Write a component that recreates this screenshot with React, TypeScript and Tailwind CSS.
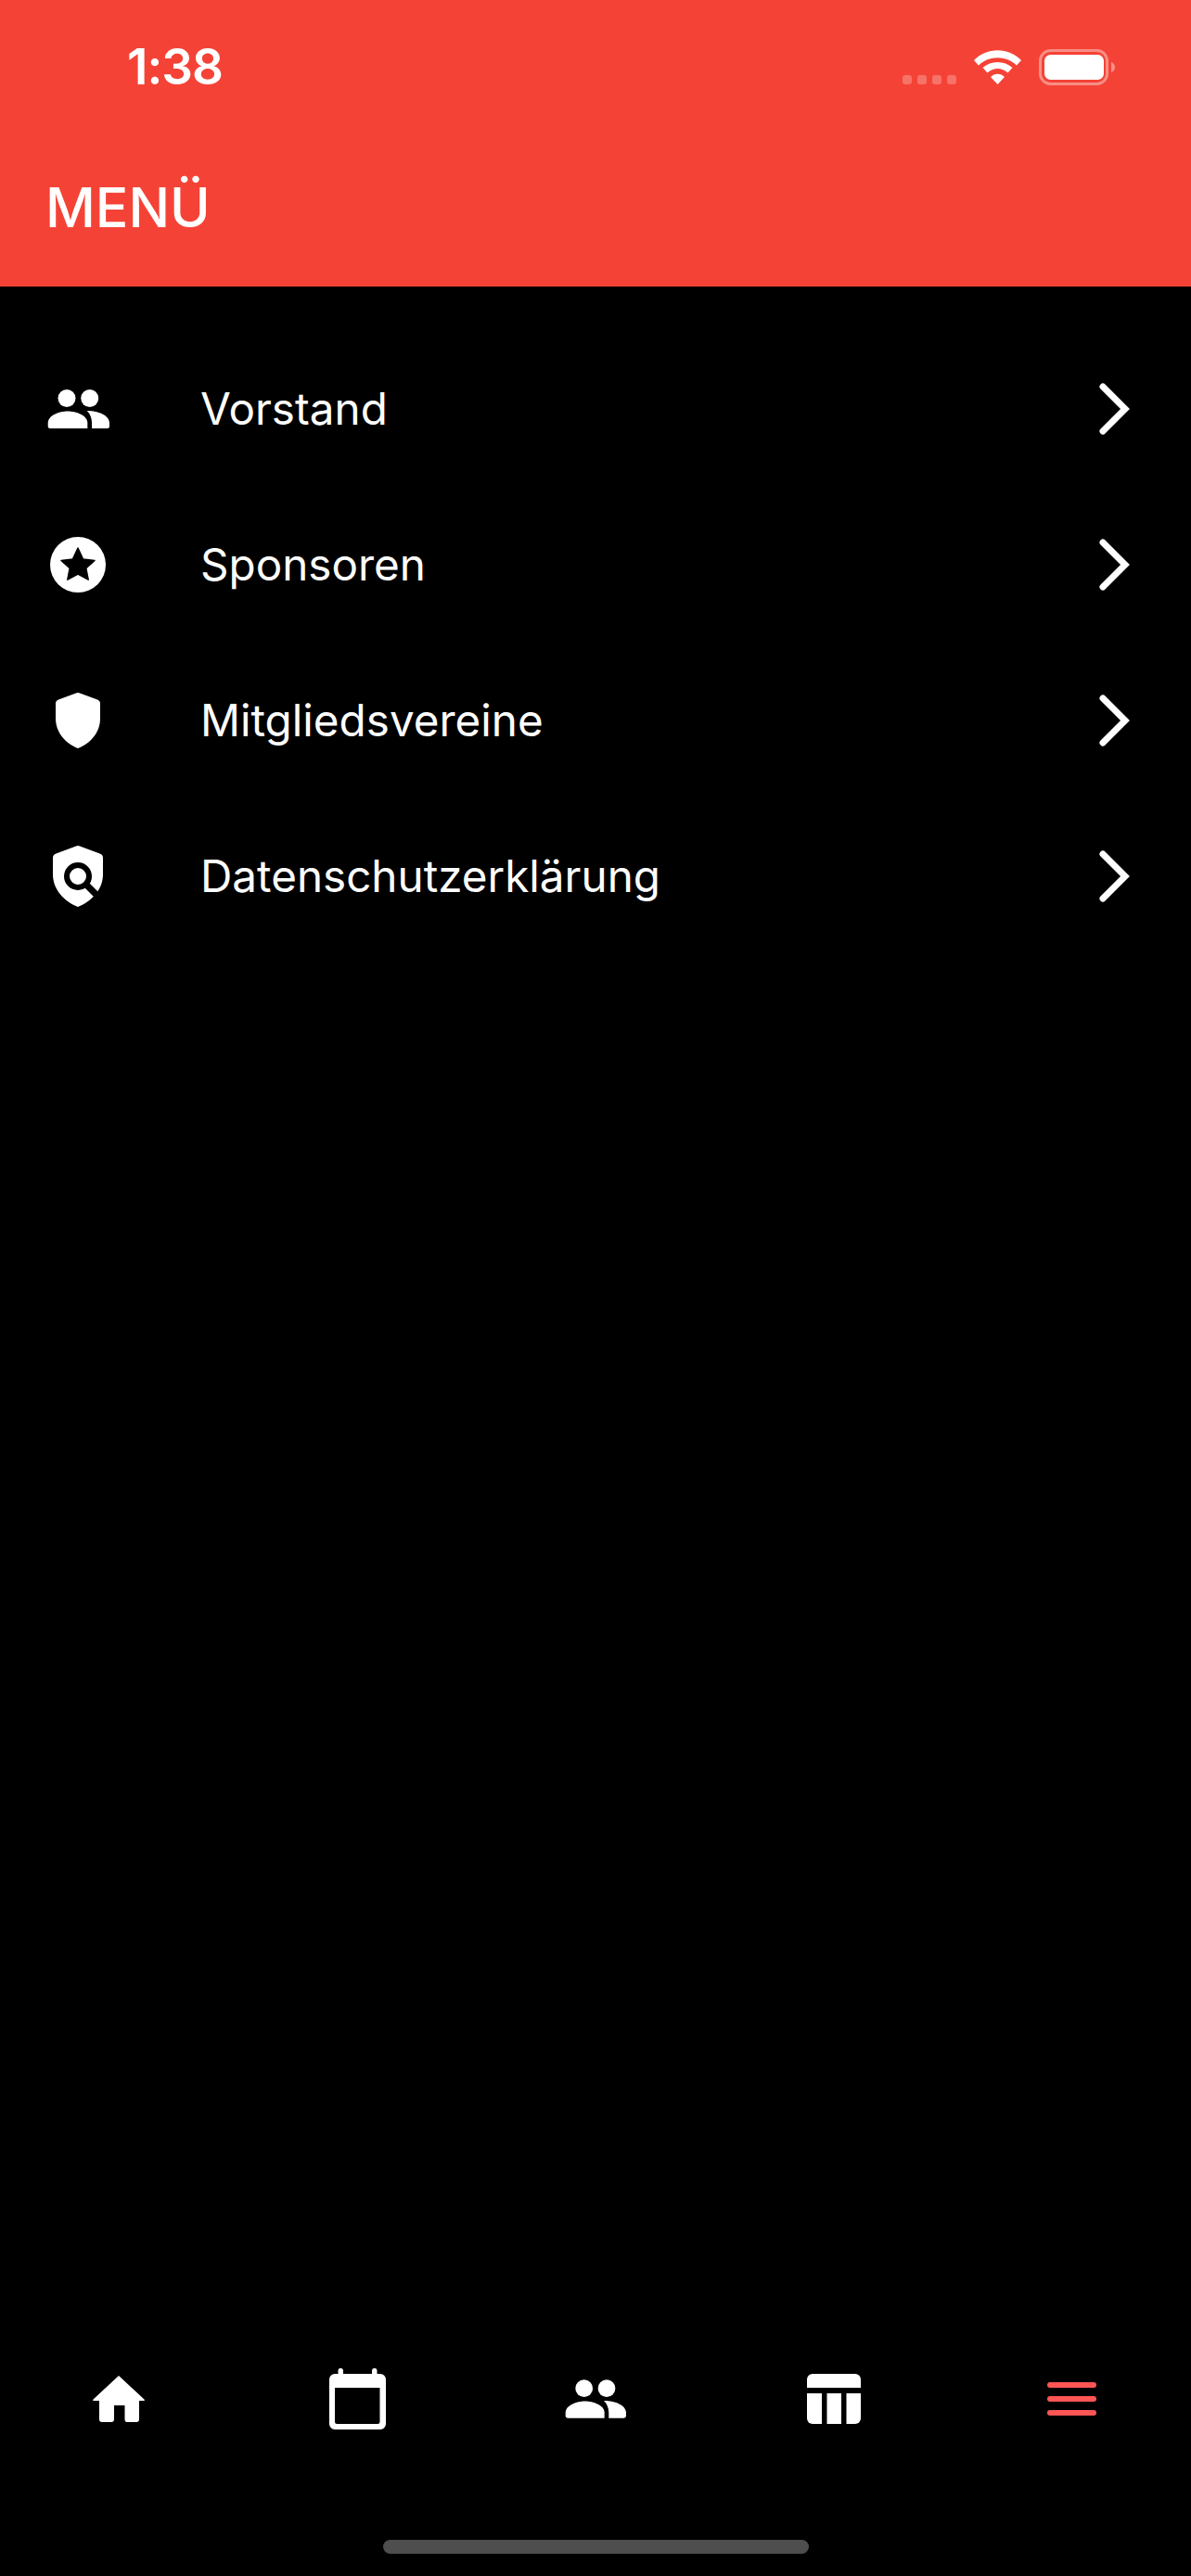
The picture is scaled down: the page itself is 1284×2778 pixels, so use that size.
const Group = ({ w, h }: { w: number; h: number }) => (
  <svg width={w} height={h} viewBox="0 0 67 42" fill="#fff">
    <circle cx="21" cy="9.5" r="9.5" />
    <circle cx="45.7" cy="9.5" r="9.5" />
    <path d="M.7 36C.7 28 13 23.5 22 23.5S43.3 28 43.3 36V42H3.2Q.7 42 .7 39.5Z" />
    <path d="M42.7 23C56 23 67 28.5 67 36V39.5Q67 42 64.5 42H48V36C48 31 46 26 42.7 23Z" />
  </svg>
);

const Star = () => (
  <svg width="60" height="60" viewBox="0 0 60 60">
    <circle cx="30" cy="30" r="30" fill="#fff" />
    <path
      d="M30 12 35.6 24 48 25.4 38.8 33.8 41.2 46.2 30 40 18.8 46.2 21.2 33.8 12 25.4 24.4 24Z"
      fill="#000"
      stroke="#000"
      strokeWidth="1.5"
      strokeLinejoin="round"
    />
  </svg>
);

const Shield = () => (
  <svg width="48" height="60" viewBox="0 0 48 60" fill="#fff">
    <path d="M22 .4Q24-.2 26 .4L45 7.4Q48 8.6 48 11.5V28C48 43 37 55 24 60 11 55 0 43 0 28V11.5Q0 8.6 3 7.4Z" />
  </svg>
);

const ShieldSearch = () => (
  <svg width="54" height="66" viewBox="0 0 54 66">
    <path
      fill="#fff"
      d="M25 .4Q27-.2 29 .4L50.5 8.4Q54 9.6 54 13V31C54 47 42 60 27 66 12 60 0 47 0 31V13Q0 9.6 3.5 8.4Z"
    />
    <circle cx="27" cy="33" r="12" fill="#fff" stroke="#000" strokeWidth="6" />
    <path d="M36 42 50 56" stroke="#000" strokeWidth="7" />
  </svg>
);

const Chevron = () => (
  <svg width="34" height="60" viewBox="0 0 34 60" fill="none">
    <path d="M5 6 29 30 5 54" stroke="#fff" strokeWidth="7" strokeLinecap="round" strokeLinejoin="miter" />
  </svg>
);

const Home = () => (
  <svg width="56" height="50" viewBox="0 0 56 50" fill="#fff">
    <path d="M28 0 56 26Q56 27 55 27H50V47Q50 50 47 50H37Q34.5 50 34.5 47V32H23V47Q23 50 20 50H10Q7 50 7 47V27H1Q0 27 0 26Z" />
  </svg>
);

const Calendar = () => (
  <svg width="61" height="66" viewBox="0 0 61 66" fill="#fff">
    <path d="M9.5 2.5a2.7 2.5 0 0 1 5.5 0V6H46V2.5a2.7 2.5 0 0 1 5.5 0V6H55a6 6 0 0 1 6 6V60a6 6 0 0 1-6 6H6a6 6 0 0 1-6-6V12a6 6 0 0 1 6-6H9.5Z" />
    <path fill="#000" d="M6 21H54.5V57.5Q54.5 60 52 60H8.5Q6 60 6 57.5Z" />
  </svg>
);

const Table = () => (
  <svg width="58" height="54" viewBox="0 0 58 54" fill="#fff">
    <path d="M6 0H52a6 6 0 0 1 6 6V15H0V6a6 6 0 0 1 6-6Z" />
    <path d="M0 21H16V54H6a6 6 0 0 1-6-6Z" />
    <path d="M21.5 21H37V54H21.5Z" />
    <path d="M42.5 21H58V48a6 6 0 0 1-6 6H42.5Z" />
  </svg>
);

const Wifi = () => (
  <svg width="51" height="37" viewBox="0 0 51 37" fill="#fff">
    <path d="M0 11C14-3.5 37-3.5 51 11L46 16.5C35 5.5 16 5.5 5 16.5Z" />
    <path d="M9.5 19C18 11 33 11 41.5 19L36.5 24.5C30 18.5 21 18.5 14.5 24.5Z" />
    <path d="M18 29C22 24.5 29 24.5 33 29L25.5 37Z" />
  </svg>
);

const Battery = () => (
  <svg width="82" height="39" viewBox="0 0 82 39">
    <rect x="1.5" y="1.5" width="72" height="36" rx="11" fill="none" stroke="#fff" strokeOpacity="0.4" strokeWidth="3" />
    <rect x="6" y="6" width="64" height="27" rx="6.5" fill="#fff" />
    <path d="M78 14C81 15 82 17 82 19.5S81 24 78 25Z" fill="#fff" fillOpacity="0.4" />
  </svg>
);

const rows = [
  { label: "Vorstand", icon: <Group w={67} h={42} /> },
  { label: "Sponsoren", icon: <Star /> },
  { label: "Mitgliedsvereine", icon: <Shield /> },
  { label: "Datenschutzerklärung", icon: <ShieldSearch /> },
];

export default function App() {
  return (
    <div className="flex h-[2778px] w-[1284px] flex-col overflow-hidden bg-black font-['Inter',sans-serif] text-white">
      <header className="h-[309px] shrink-0 bg-[#f44336] pt-[53px]">
        <div className="flex h-[39px] items-center justify-between pl-[137px] pr-[82px]">
          <span className="text-[53px] font-semibold leading-[39px] tracking-[-1px]">1:38</span>
          <div className="flex items-end">
            <div className="mb-px flex gap-[6px]">
              <span className="h-[10px] w-[10px] rounded-[3px] bg-white/25" />
              <span className="h-[10px] w-[10px] rounded-[3px] bg-white/25" />
              <span className="h-[10px] w-[10px] rounded-[3px] bg-white/25" />
              <span className="h-[10px] w-[10px] rounded-[3px] bg-white/25" />
            </div>
            <div className="mb-px ml-[19px] mr-[19px]">
              <Wifi />
            </div>
            <Battery />
          </div>
        </div>
        <h1 className="mt-[97px] pl-[49px] text-[59px] font-medium leading-[70px]">MENÜ</h1>
      </header>

      <main className="flex-1 pt-12">
        {rows.map((r) => (
          <div key={r.label} className="flex h-[168px] items-center pr-[66px]">
            <div className="flex w-[168px] shrink-0 justify-center">{r.icon}</div>
            <span className="ml-[48px] flex-1 text-[47.6px] leading-none">{r.label}</span>
            <Chevron />
          </div>
        ))}
      </main>

      <nav className="grid h-[98px] shrink-0 grid-cols-5 items-center">
        <div className="flex justify-center"><Home /></div>
        <div className="flex justify-center"><Calendar /></div>
        <div className="flex justify-center"><Group w={66} h={42} /></div>
        <div className="flex justify-center"><Table /></div>
        <div className="flex justify-center">
          <div className="flex w-[53px] flex-col gap-[9px]">
            <span className="h-[6px] rounded-full bg-[#ff5555]" />
            <span className="h-[6px] rounded-full bg-[#ff5555]" />
            <span className="h-[6px] rounded-full bg-[#ff5555]" />
          </div>
        </div>
      </nav>

      <div className="flex h-[142px] shrink-0 justify-center pt-[103px]">
        <div className="h-[15px] w-[459px] rounded-full bg-[#4e4e4e]" />
      </div>
    </div>
  );
}
